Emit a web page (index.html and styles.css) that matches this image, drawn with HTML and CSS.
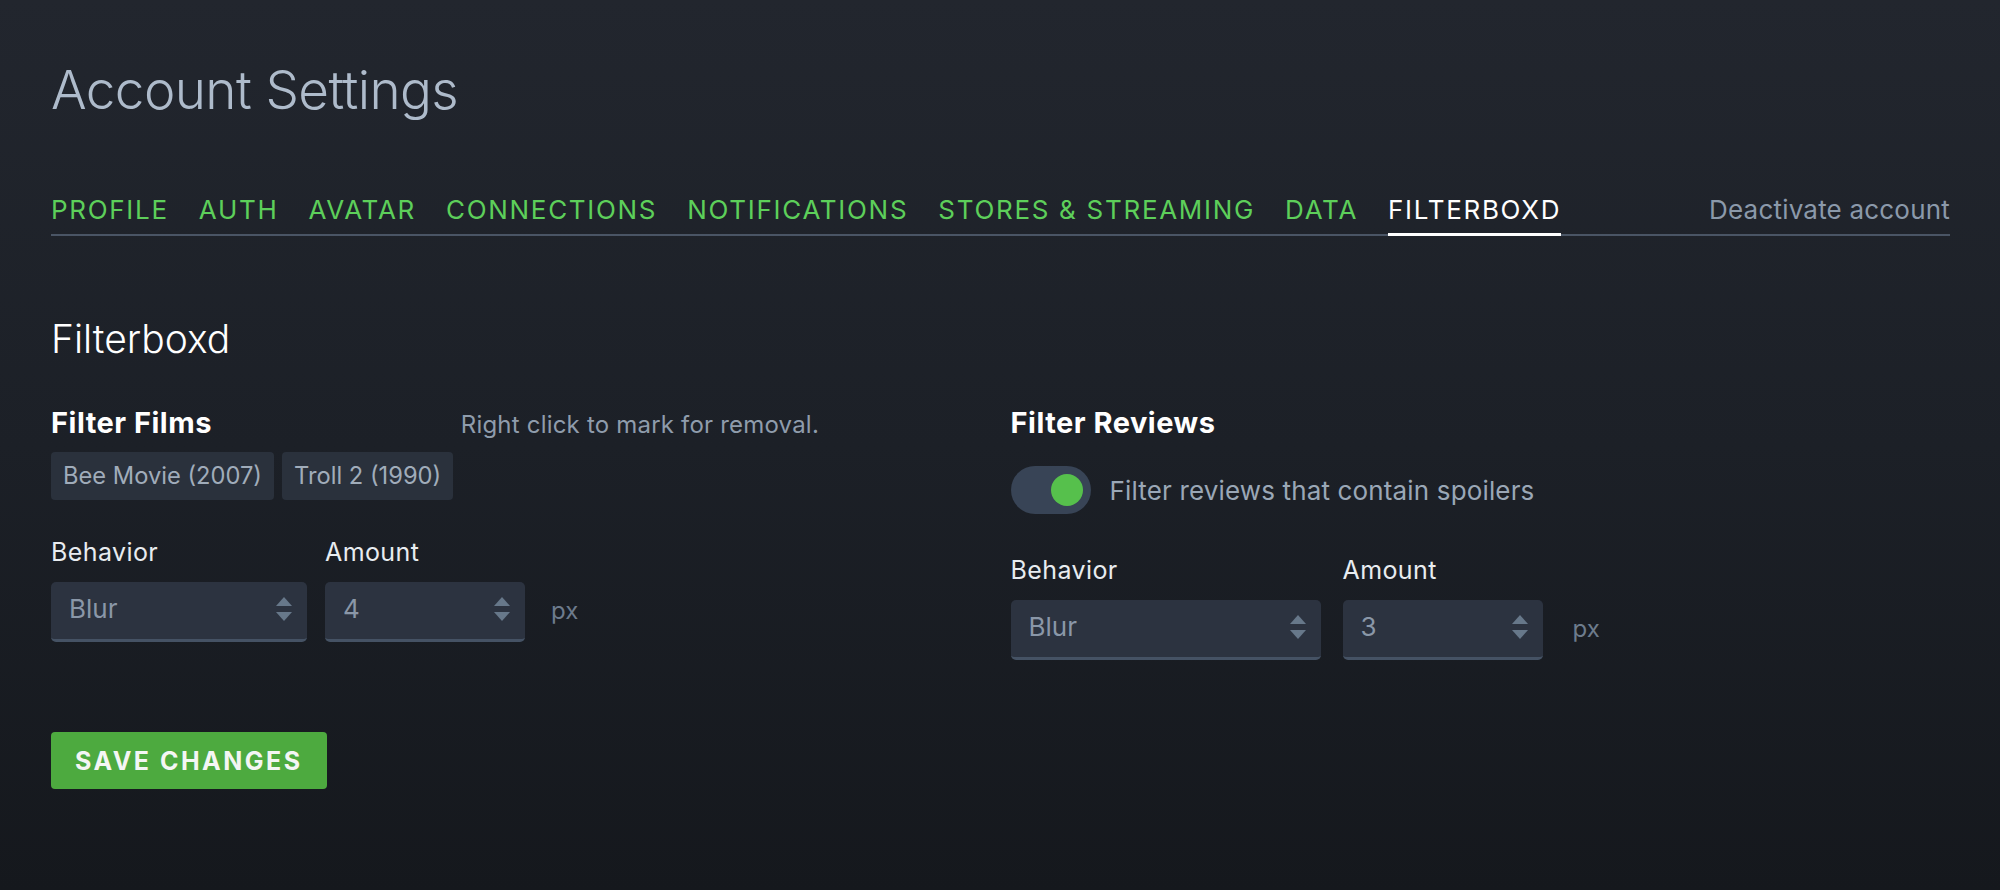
FILE: index.html
```html
<!DOCTYPE html>
<html lang="en">
<head>
<meta charset="utf-8">
<title>Account Settings</title>
<link rel="stylesheet" href="styles.css">
</head>
<body>
<main class="page">
  <h1 class="page-title">Account Settings</h1>
  <nav class="tabs">
    <a class="tab">Profile</a>
    <a class="tab">Auth</a>
    <a class="tab">Avatar</a>
    <a class="tab">Connections</a>
    <a class="tab">Notifications</a>
    <a class="tab">Stores &amp; Streaming</a>
    <a class="tab">Data</a>
    <a class="tab tab-active">Filterboxd</a>
    <a class="deactivate">Deactivate account</a>
  </nav>

  <h2 class="section-title">Filterboxd</h2>

  <div class="columns">
    <section class="col">
      <div class="col-head films-head">
        <h3 class="col-title">Filter Films</h3>
        <span class="note">Right click to mark for removal.</span>
      </div>
      <div class="chips">
        <span class="chip">Bee Movie (2007)</span>
        <span class="chip">Troll 2 (1990)</span>
      </div>
      <div class="fields fields-left">
        <div class="field">
          <label class="field-label">Behavior</label>
          <div class="control select-left">
            <span class="control-value">Blur</span>
            <svg class="spin" width="16" height="24" viewBox="0 0 16 24"><polygon points="8,0 16,9 0,9"/><polygon points="0,15 16,15 8,24"/></svg>
          </div>
        </div>
        <div class="field">
          <label class="field-label">Amount</label>
          <div class="control input-amount">
            <span class="control-value">4</span>
            <svg class="spin" width="16" height="24" viewBox="0 0 16 24"><polygon points="8,0 16,9 0,9"/><polygon points="0,15 16,15 8,24"/></svg>
          </div>
        </div>
        <span class="unit">px</span>
      </div>
    </section>

    <section class="col">
      <div class="col-head">
        <h3 class="col-title">Filter Reviews</h3>
      </div>
      <div class="toggle-row">
        <span class="toggle"><span class="knob"></span></span>
        <span class="toggle-label">Filter reviews that contain spoilers</span>
      </div>
      <div class="fields fields-right">
        <div class="field">
          <label class="field-label">Behavior</label>
          <div class="control select-right">
            <span class="control-value">Blur</span>
            <svg class="spin" width="16" height="24" viewBox="0 0 16 24"><polygon points="8,0 16,9 0,9"/><polygon points="0,15 16,15 8,24"/></svg>
          </div>
        </div>
        <div class="field">
          <label class="field-label">Amount</label>
          <div class="control input-amount">
            <span class="control-value">3</span>
            <svg class="spin" width="16" height="24" viewBox="0 0 16 24"><polygon points="8,0 16,9 0,9"/><polygon points="0,15 16,15 8,24"/></svg>
          </div>
        </div>
        <span class="unit">px</span>
      </div>
    </section>
  </div>

  <button class="save" type="button">Save Changes</button>
</main>
</body>
</html>
```

FILE: styles.css
```css
html, body {
  margin: 0;
  padding: 0;
}
body {
  min-height: 890px;
  background: linear-gradient(180deg, #22262e 0%, #1c2027 50%, #15181d 100%);
  font-family: Inter, "Noto Sans", sans-serif;
  color: #9aa6b5;
}
.page {
  padding: 0 50px 0 51px;
}
.page-title {
  margin: 60px 0 73px;
  font-size: 53px;
  line-height: 60px;
  font-weight: 300;
  color: #aebbcb;
  letter-spacing: -0.6px;
}
.tabs {
  display: flex;
  align-items: flex-end;
  gap: 30px;
  border-bottom: 2px solid #4a5565;
}
.tab {
  font-size: 26px;
  line-height: 34px;
  text-transform: uppercase;
  letter-spacing: 1.7px;
  color: #5dcf5a;
  padding-bottom: 6px;
  margin-bottom: -2px;
  border-bottom: 3px solid transparent;
}
.tab-active {
  color: #ffffff;
  border-bottom-color: #ffffff;
}
.deactivate {
  margin-left: auto;
  font-size: 26px;
  line-height: 34px;
  letter-spacing: 0.2px;
  color: #8b99aa;
  padding-bottom: 7px;
}
.section-title {
  margin: 79px 0 43px;
  font-size: 39px;
  line-height: 48px;
  font-weight: 300;
  color: #ffffff;
}
.columns {
  display: grid;
  grid-template-columns: 1fr 1fr;
  column-gap: 20px;
}
.col-head {
  display: flex;
  align-items: baseline;
}
.films-head {
  width: 768px;
  justify-content: space-between;
}
.col-title {
  margin: 0;
  font-size: 29px;
  line-height: 34px;
  font-weight: 700;
  letter-spacing: 0.5px;
  color: #ffffff;
}
.note {
  font-size: 24px;
  letter-spacing: 0.2px;
  color: #8f9cac;
}
.chips {
  display: flex;
  gap: 8px;
  margin-top: 12px;
}
.chip {
  background: #2a313c;
  color: #a0acba;
  font-size: 23.7px;
  line-height: 32px;
  padding: 8px 12px;
  border-radius: 4px;
}
.fields {
  display: flex;
  align-items: flex-end;
}
.fields-left {
  margin-top: 36px;
  gap: 18px;
}
.fields-right {
  margin-top: 40px;
  gap: 22px;
}
.field {
  display: flex;
  flex-direction: column;
  gap: 14px;
}
.field-label {
  font-size: 25px;
  line-height: 32px;
  letter-spacing: 0.4px;
  color: #e8ecf0;
}
.control {
  box-sizing: border-box;
  height: 60px;
  display: flex;
  align-items: center;
  justify-content: space-between;
  padding: 0 15px 3px 18px;
  background: #2c3340;
  border-bottom: 3px solid #455264;
  border-radius: 5px;
}
.select-left { width: 256px; }
.select-right { width: 310px; }
.input-amount { width: 200px; }
.control-value {
  font-size: 26px;
  line-height: 34px;
  color: #8a97a8;
}
.spin {
  display: block;
  fill: #67788a;
}
.unit {
  height: 60px;
  line-height: 57px;
  font-size: 24px;
  color: #6d7b8c;
  margin-left: 8px;
}
.toggle-row {
  display: flex;
  align-items: center;
  gap: 19px;
  margin-top: 26px;
}
.toggle {
  box-sizing: border-box;
  width: 80px;
  height: 48px;
  padding: 8px;
  border-radius: 24px;
  background: #384456;
  display: flex;
  justify-content: flex-end;
}
.knob {
  width: 32px;
  height: 32px;
  border-radius: 50%;
  background: #56c04c;
}
.toggle-label {
  font-size: 26px;
  letter-spacing: 0.15px;
  color: #9aa7b6;
}
.save {
  margin-top: 72px;
  height: 57px;
  padding: 0 24px;
  border: 0;
  border-radius: 4px;
  background: #4daa3f;
  color: #f4f6f4;
  font-family: Inter, "Noto Sans", sans-serif;
  font-size: 25px;
  font-weight: 700;
  letter-spacing: 2.5px;
  text-transform: uppercase;
}
```
